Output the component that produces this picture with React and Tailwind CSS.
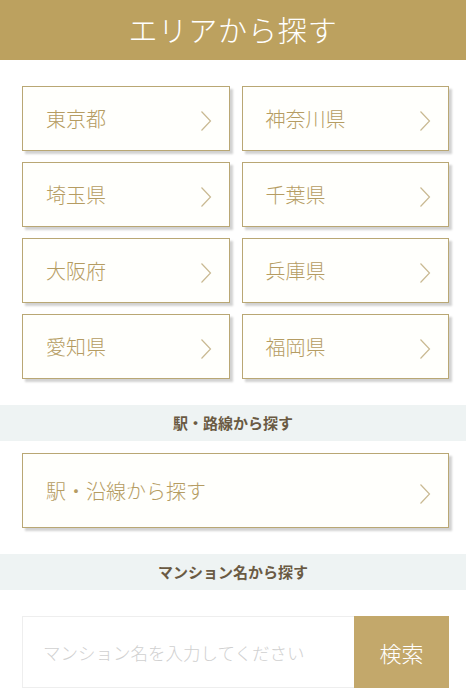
const prefs = ["東京都", "神奈川県", "埼玉県", "千葉県", "大阪府", "兵庫県", "愛知県", "福岡県"];

function Chevron() {
  return (
    <svg width="12" height="22" viewBox="0 0 12 22" className="shrink-0">
      <path d="M1.5 1.5 L10.5 11 L1.5 20.5" fill="none" stroke="#c9b992" strokeWidth="1.2" />
    </svg>
  );
}

function LinkCard({ label, tall }) {
  return (
    <a
      href="#"
      className={`flex items-center justify-between border border-[#b9a774] bg-[#fffffc] pl-[23px] pr-[17px] shadow-[3px_3px_2px_rgba(0,0,0,0.18)] ${tall ? "h-[75px]" : "h-[65px]"}`}
    >
      <span className="text-[20px] font-light text-[#b59c62]">{label}</span>
      <span className={tall ? "mt-[6px]" : "mt-[4px]"}>
        <Chevron />
      </span>
    </a>
  );
}

function Band({ children }) {
  return (
    <div className="flex h-[36px] items-center justify-center bg-[#eef3f3] text-[15px] font-bold text-[#6a5a43]">
      {children}
    </div>
  );
}

export default function App() {
  return (
    <main
      className="min-h-[696px] bg-white"
      style={{ fontFamily: '"Noto Sans CJK JP", "Noto Sans", sans-serif' }}
    >
      <header className="flex h-[60px] items-center justify-center bg-[#bca15f]">
        <h1 className="text-[29px] font-light tracking-[0.03em] text-white">エリアから探す</h1>
      </header>

      <section className="grid grid-cols-2 gap-x-[12px] gap-y-[11px] pl-[22px] pr-[17px] pt-[26px] pb-[26px]">
        {prefs.map((p) => (
          <LinkCard key={p} label={p} />
        ))}
      </section>

      <Band>駅・路線から探す</Band>
      <div className="pl-[22px] pr-[17px] pt-[12px] pb-[26px]">
        <LinkCard label="駅・沿線から探す" tall />
      </div>

      <Band>マンション名から探す</Band>
      <div className="flex pl-[22px] pr-[17px] pt-[26px] pb-[9px]">
        <input
          type="text"
          placeholder="マンション名を入力してください"
          className="h-[72px] min-w-0 flex-1 border border-r-0 border-[#eeeeee] bg-white pl-[20px] text-[17.5px] font-light text-[#555] outline-none placeholder:text-[#d0d0d0]"
        />
        <button className="h-[72px] w-[95px] bg-[#c3a86b] text-[22px] font-light text-white">検索</button>
      </div>
    </main>
  );
}
